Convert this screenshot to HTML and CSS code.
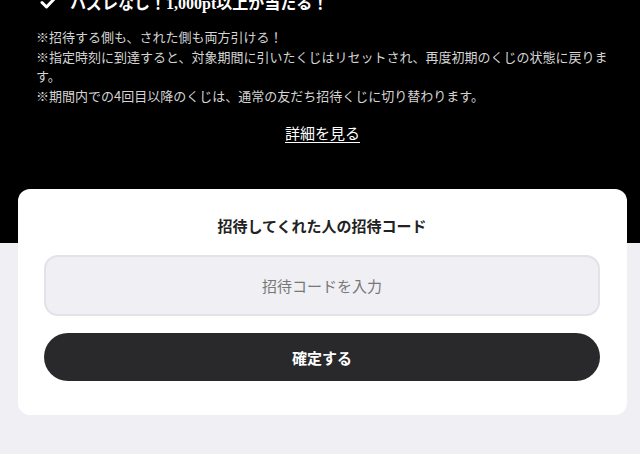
FILE: index.html
```html
<!DOCTYPE html>
<html lang="ja">
<head>
    <meta charset="UTF-8">
    <meta name="viewport" content="width=device-width, initial-scale=1.0">
    <title>友だち招待</title>
    <link rel="stylesheet" href="styles.css">
</head>
<body>

<section class="hero">
    <h2 class="hero-title">
        <svg class="check-icon" width="18" height="14" viewBox="0 0 18 14">
            <path d="M2 7.5 L6.5 12 L16 2" fill="none" stroke="#fff" stroke-width="3" stroke-linecap="round" stroke-linejoin="round"/>
        </svg>
        <span>ハズレなし！1,000pt以上が当たる！</span>
    </h2>
    <div class="notes">
        <p>※招待する側も、された側も両方引ける！</p>
        <p>※指定時刻に到達すると、対象期間に引いたくじはリセットされ、再度初期のくじの状態に戻ります。</p>
        <p>※期間内での4回目以降のくじは、通常の友だち招待くじに切り替わります。</p>
    </div>
    <a class="detail-link" href="#">詳細を見る</a>
</section>

<div class="card">
    <h3 class="card-title">招待してくれた人の招待コード</h3>
    <input class="code-input" type="text" placeholder="招待コードを入力">
    <button class="submit-btn">確定する</button>
</div>

</body>
</html>
```

FILE: styles.css
```css
body {
    font-family: "Noto Sans CJK JP", "Noto Sans", sans-serif;
    margin: 0;
    padding: 0;
    background-color: #efeff4;
    color: #222;
}
.hero {
    background-color: #000;
    color: #fff;
    padding: 0 31px 100px 36px;
    display: flex;
    flex-direction: column;
}
.hero-title {
    display: flex;
    align-items: center;
    gap: 12px;
    margin: -10px 0 0 4px;
    height: 24px;
    font-family: "Liberation Serif", "Noto Sans CJK JP", serif;
    font-size: 16px;
    font-weight: bold;
}
.check-icon {
    flex-shrink: 0;
}
.notes {
    margin-top: 13px;
    font-size: 13px;
    line-height: 19.5px;
    color: #d4d4d4;
}
.notes p {
    margin: 0;
}
.detail-link {
    align-self: center;
    margin-top: 18px;
    color: #fff;
    font-size: 15px;
    line-height: 20px;
    text-decoration: underline;
    text-underline-offset: 3px;
}
.card {
    background-color: #fff;
    margin: -54px 13px 0 18px;
    border-radius: 12px;
    padding: 27px 27px 34px 26px;
    display: flex;
    flex-direction: column;
}
.card-title {
    margin: 0;
    text-align: center;
    font-size: 15px;
    line-height: 20px;
    font-weight: bold;
    color: #222;
}
.code-input {
    margin-top: 19px;
    height: 61px;
    box-sizing: border-box;
    border: 2px solid #e2e2e8;
    border-radius: 14px;
    background-color: #efeff4;
    text-align: center;
    font-family: inherit;
    font-size: 15px;
    color: #222;
    outline: none;
}
.code-input::placeholder {
    color: #777;
}
.submit-btn {
    margin-top: 17px;
    height: 48px;
    border: none;
    border-radius: 24px;
    background-color: #29292b;
    color: #fff;
    font-family: inherit;
    font-size: 15px;
    font-weight: bold;
    cursor: pointer;
}
```
